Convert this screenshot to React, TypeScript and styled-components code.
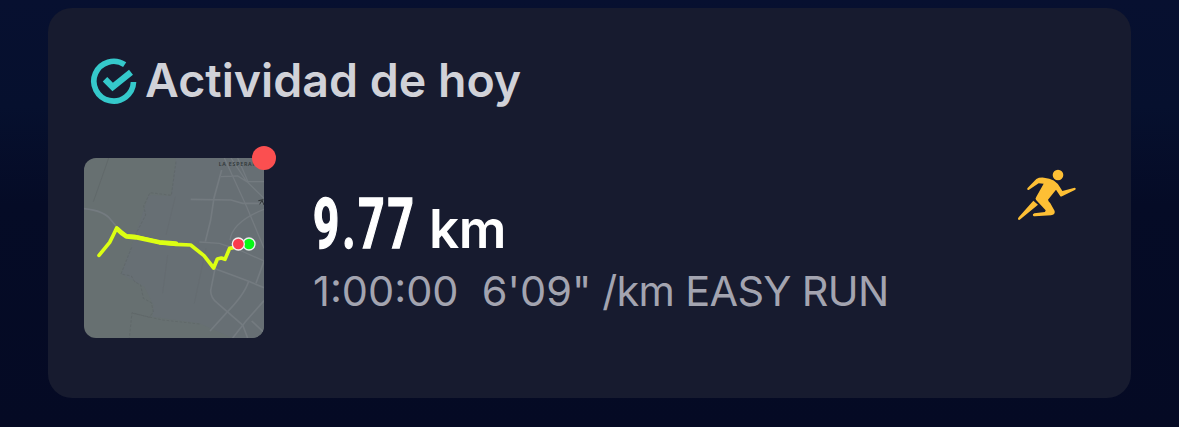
import React from "react";
import styled, { createGlobalStyle } from "styled-components";

const GlobalStyle = createGlobalStyle`
  * { box-sizing: border-box; }
  body { margin: 0; background: #050a25; font-family: Inter, "Liberation Sans", sans-serif; }
`;

const Screen = styled.main`
  height: 427px;
  padding: 8px 48px 29px;
  background: linear-gradient(180deg, #071030 0%, #06102e 25%, #050b26 48%, #050a24 100%);
`;

const Card = styled.section`
  height: 390px;
  border-radius: 24px;
  background: #171b2f;
  padding: 42px 36px 0;
`;

const Header = styled.header`
  display: flex;
  align-items: center;
  gap: 7px;
  height: 60px;
  padding-left: 6px;
`;

const CheckMark = styled.svg`
  width: 48px;
  height: 48px;
  margin-top: 4px;
`;

const Title = styled.h1`
  margin: 0;
  color: #d1d2d8;
  font-size: 46.5px;
  line-height: 60px;
  font-weight: 600;
  white-space: nowrap;
`;

const Activity = styled.div`
  display: flex;
  margin-top: 48px;
`;

const Thumbnail = styled.div`
  position: relative;
  width: 180px;
  height: 180px;
  flex: none;
`;

const MapImage = styled.svg`
  display: block;
  width: 180px;
  height: 180px;
  border-radius: 12px;
`;

const UnreadDot = styled.span`
  position: absolute;
  top: -12px;
  right: -12px;
  width: 24px;
  height: 24px;
  border-radius: 50%;
  background: #fb4f50;
`;

const Details = styled.div`
  flex: 1;
  padding: 27px 0 0 49px;
`;

const Distance = styled.div`
  display: flex;
  align-items: baseline;
  height: 81px;
  line-height: 78px;
  color: #fff;
`;

const DistanceValue = styled.span`
  width: 116px;
  font-family: Roboto, sans-serif;
  font-size: 71px;
  font-weight: 700;
  letter-spacing: 4.5px;
  -webkit-text-stroke: 1.6px #fff;
  transform: scaleX(0.645);
  transform-origin: left;
  white-space: nowrap;
`;

const DistanceUnit = styled.span`
  font-size: 53px;
  font-weight: 600;
  letter-spacing: -0.5px;
`;

const Stats = styled.div`
  color: #a3a4b0;
  font-size: 41.5px;
  line-height: 50px;
  white-space: pre;
`;

const StatsLabel = styled.span`
  letter-spacing: -0.7px;
`;

const SportIcon = styled.svg`
  width: 85px;
  height: 80px;
  flex: none;
  margin: -3px 5px 0 0;
`;

function CheckIcon() {
  return (
    <CheckMark viewBox="30 37 144 144" fill="none" stroke="#35c9cb">
      <path d="M134 57A59.5 59.5 0 1 0 160.500 109" strokeWidth="17" />
      <path d="M75 101L98 124L153 80" strokeWidth="19" />
    </CheckMark>
  );
}

function RouteMap() {
  return (
    <MapImage viewBox="24 54 540 540">
      <rect x="24" y="54" width="540" height="540" fill="#677071" />
      <path d="M300 54L285 168L218 165L178 285L135 402L205 440L232 495L230 530L370 550L470 594H564V54Z" fill="#676f74" />
      <g fill="none" stroke="#5d6567" strokeWidth="2">
        <path d="M98 54L75 120L52 185" />
        <path d="M300 65L286 166L222 158L203 198L209 225L178 285M167 322L135 402L166 408L176 425L194 435L202 475L226 488L232 515L220 532L168 518L160 594" strokeDasharray="8 5" />
        <path d="M170 520L260 540L370 552" strokeDasharray="8 5" />
        <path d="M298 170L270 285M275 345L260 460M390 325L355 490" opacity=".35" />
      </g>
      <g fill="none" stroke="#747b80" strokeWidth="5">
        <path d="M24 206Q85 212 105 240L123 262" />
        <path d="M437 90L414 174L404 240L388 305" />
        <path d="M445 54L512 200L564 325M465 54L510 122L564 175M485 54L516 125H564M435 110L485 108L516 127" strokeWidth="4" />
        <path d="M344 178L465 180L500 190H564" />
        <path d="M564 208Q470 245 462 300M370 306L430 310L490 330L564 363" strokeWidth="4" />
        <path d="M417 386L470 406L518 424L564 443M417 386L404 452Q404 474 425 490L500 555L515 594" />
        <path d="M518 424Q505 465 450 520L402 573M564 482L510 543L470 594M564 363L540 430M527 543L564 577" />
      </g>
      <text x="428" y="79" fontFamily="Noto Sans, sans-serif" fontSize="16" fontWeight="600" textLength="114" fill="#303739">LA ESPERAN</text>
      <path d="M547 182L562 179M551 193L558 181L564 195" fill="none" stroke="#303436" strokeWidth="3" />
      <g fill="none" stroke="#dcff13" strokeLinecap="round" strokeLinejoin="round">
        <path d="M69 346L101 307L112 285L122 264L135 277L150 288L180 290L250 307L300 313L344 315L384 347L413 384L424 357L436 354L447 358L461 325L475 322" strokeWidth="11" />
        <path d="M124 267L137 279L151 289L180 292L250 307L300 311" strokeWidth="14" />
      </g>
      <circle cx="519" cy="312" r="18" fill="#06f915" stroke="#e8efe9" strokeWidth="4" />
      <circle cx="487" cy="312" r="18" fill="#fa3b4c" stroke="#f3eced" strokeWidth="4" />
    </MapImage>
  );
}

function Runner() {
  return (
    <SportIcon viewBox="0 0 255 240" fill="#fdbf35">
      <circle cx="159" cy="60" r="16" />
      <path d="M67 100L94 72Q102 67 117 68Q151 70 166 98L172 108L209 98Q215 100 211 104L171 124Q167 126 165 122L153 104L129 134Q130 139 136 145L149 168Q151 179 138 181L90 184Q82 184 84 178L88 175L120 171L122 166L94 136Q89 131 94 125L116 86L101 85L71 105Q65 106 67 100Z" />
      <path d="M85 137L99 149L46 193Q42 197 39 193Q38 191 41 187Z" />
    </SportIcon>
  );
}

export default function App() {
  return (
    <>
      <GlobalStyle />
      <Screen>
        <Card>
          <Header>
            <CheckIcon />
            <Title>Actividad de hoy</Title>
          </Header>
          <Activity>
            <Thumbnail>
              <RouteMap />
              <UnreadDot />
            </Thumbnail>
            <Details>
              <Distance>
                <DistanceValue>9.77</DistanceValue>
                <DistanceUnit>km</DistanceUnit>
              </Distance>
              <Stats>
                {"1:00:00  6'09\""}
                <StatsLabel>{" /km EASY RUN"}</StatsLabel>
              </Stats>
            </Details>
            <Runner />
          </Activity>
        </Card>
      </Screen>
    </>
  );
}
